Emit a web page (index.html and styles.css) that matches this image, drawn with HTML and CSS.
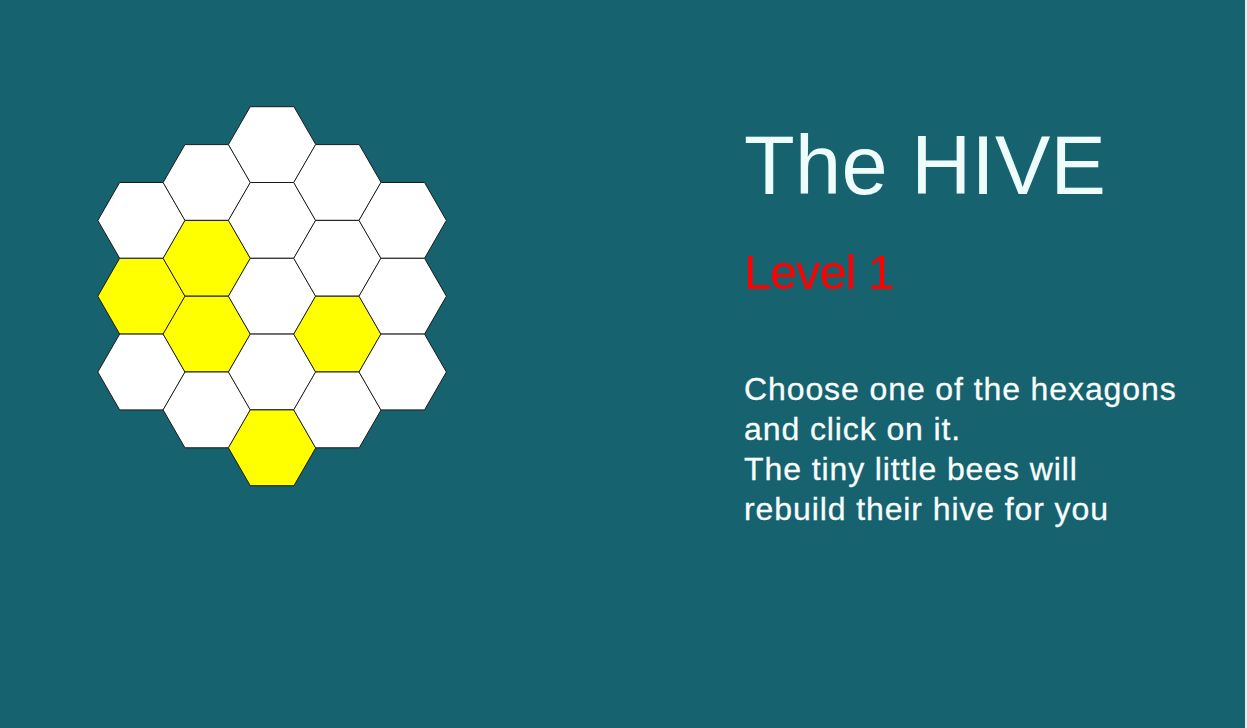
FILE: index.html
```html
<!DOCTYPE html>
<html lang="en">
<head>
<meta charset="utf-8">
<title>The HIVE</title>
<link rel="stylesheet" href="styles.css">
</head>
<body>
<main class="page">
  <section class="board">
    <svg class="hive" width="370" height="395" viewBox="90 100 370 395" xmlns="http://www.w3.org/2000/svg">
      <defs>
        <polygon id="hex" points="-43.7,0 -21.85,-37.9 21.85,-37.9 43.7,0 21.85,37.9 -21.85,37.9"/>
      </defs>
      <!-- column 0 -->
      <use href="#hex" class="cell" x="141.5" y="220.4"/>
      <use href="#hex" class="cell filled" x="141.5" y="296.2"/>
      <use href="#hex" class="cell" x="141.5" y="372.0"/>
      <!-- column 1 -->
      <use href="#hex" class="cell" x="206.8" y="182.5"/>
      <use href="#hex" class="cell filled" x="206.8" y="258.3"/>
      <use href="#hex" class="cell filled" x="206.8" y="334.1"/>
      <use href="#hex" class="cell" x="206.8" y="409.9"/>
      <!-- column 2 -->
      <use href="#hex" class="cell" x="272.1" y="144.6"/>
      <use href="#hex" class="cell" x="272.1" y="220.4"/>
      <use href="#hex" class="cell" x="272.1" y="296.2"/>
      <use href="#hex" class="cell" x="272.1" y="372.0"/>
      <use href="#hex" class="cell filled" x="272.1" y="447.8"/>
      <!-- column 3 -->
      <use href="#hex" class="cell" x="337.4" y="182.5"/>
      <use href="#hex" class="cell" x="337.4" y="258.3"/>
      <use href="#hex" class="cell filled" x="337.4" y="334.1"/>
      <use href="#hex" class="cell" x="337.4" y="409.9"/>
      <!-- column 4 -->
      <use href="#hex" class="cell" x="402.7" y="220.4"/>
      <use href="#hex" class="cell" x="402.7" y="296.2"/>
      <use href="#hex" class="cell" x="402.7" y="372.0"/>
    </svg>
  </section>
  <section class="info">
    <h1 class="title">The HIVE</h1>
    <h2 class="level">Level 1</h2>
    <p class="instructions">Choose one of the hexagons<br>and click on it.<br>The tiny little bees will<br>rebuild their hive for you</p>
  </section>
</main>
</body>
</html>
```
FILE: styles.css
```css
html, body {
  margin: 0;
  padding: 0;
  background: #e4ebef;
  overflow: hidden;
}

.page {
  display: flex;
  align-items: flex-start;
  box-sizing: border-box;
  width: calc(100vw - 2px);
  height: 728px;
  background: #16626f;
  padding-left: 90px;
  font-family: "Liberation Sans", Arial, sans-serif;
}

.board {
  margin-top: 100px;
  width: 370px;
  height: 395px;
}

.hive {
  display: block;
}

.cell {
  fill: #ffffff;
  stroke: #1a1a1a;
  stroke-width: 1;
}

.cell.filled {
  fill: #ffff00;
}

.info {
  margin-top: 124px;
  margin-left: 284px;
  display: flex;
  flex-direction: column;
}

.title {
  margin: 0;
  font-size: 83px;
  line-height: 83px;
  font-weight: normal;
  letter-spacing: 0.3px;
  color: #eefcfc;
}

.level {
  margin: 41px 0 0 0;
  font-size: 49px;
  line-height: 49px;
  font-weight: normal;
  letter-spacing: -1.2px;
  color: #ff0000;
}

.instructions {
  margin: 72px 0 0 0;
  font-size: 32px;
  line-height: 40px;
  letter-spacing: 0.9px;
  color: #f8fdfd;
  -webkit-text-stroke: 0.3px #f8fdfd;
}
```
